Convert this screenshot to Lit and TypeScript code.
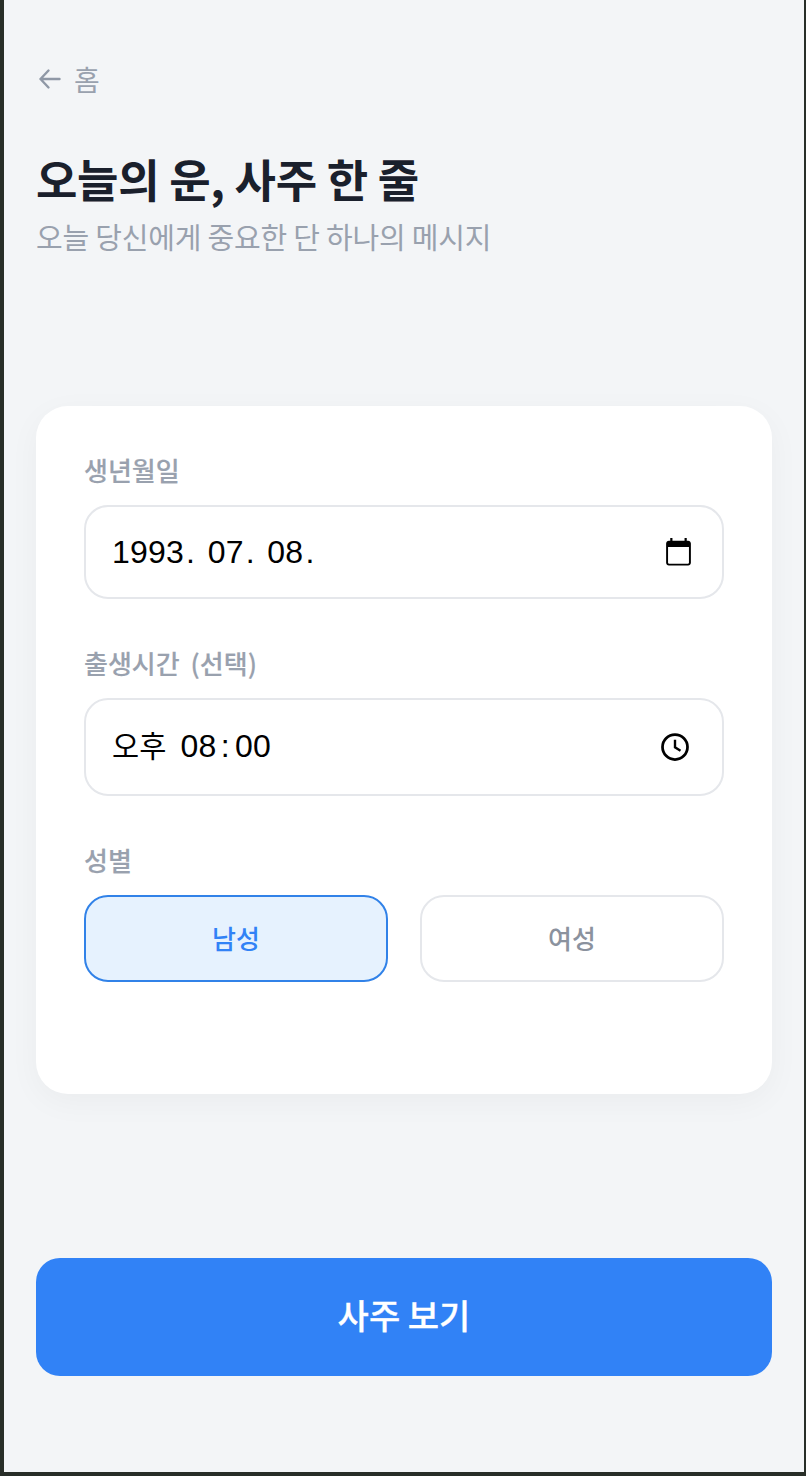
import { LitElement, html, css } from "lit";
import { customElement } from "lit/decorators.js";

@customElement("app-root")
export class AppRoot extends LitElement {
  static styles = css`
    :host { display: block; background: #282e28; padding: 0 2px 4px 4px; height: 1472px; font-family: "Noto Sans CJK KR", sans-serif; }
    .page { height: 1472px; box-sizing: border-box; background: #f3f5f7; padding: 60px 32px 96px; display: flex; flex-direction: column; }
    .back { display: flex; align-items: center; gap: 11px; height: 38px; color: #99a1ae; font-size: 28px; line-height: 38px; padding-left: 1px; }
    .back svg { width: 26px; height: 26px; display: block; }
    h1 { margin: 52px 0 0; font-size: 45px; line-height: 58px; font-weight: 700; color: #1a202c; letter-spacing: -0.3px; }
    .sub { margin: 8px 0 0; font-size: 29px; line-height: 40px; color: #99a1ae; font-weight: 400; letter-spacing: -0.2px; }
    .card { margin-top: 150px; height: 688px; box-sizing: border-box; background: #fff; border-radius: 32px; padding: 46px 48px 48px; box-shadow: 0 8px 32px rgba(0,0,0,.04); }
    .label { font-size: 26px; line-height: 35px; font-weight: 500; color: #99a1ae; word-spacing: 5px; -webkit-text-stroke: 0.15px #99a1ae; }
    .input { box-sizing: border-box; margin-top: 18px; border: 2px solid #e5e7eb; border-radius: 24px; padding: 0 26px; display: flex; align-items: center; justify-content: space-between; font-family: "Liberation Sans", "Noto Sans CJK KR", sans-serif; font-size: 32px; color: #000; background: #fff; }
    .date { height: 94px; margin-bottom: 46px; letter-spacing: 0.2px; word-spacing: 3.5px; }
    .date .dot { margin-left: 2px; }
    .date svg { margin-right: 1px; }
    .time { height: 98px; margin-bottom: 46px; letter-spacing: 0.3px; }
    .time svg { margin-right: 6px; }
    .time .val { padding-bottom: 6px; }
    .time .kr { font-family: "Noto Sans CJK KR", sans-serif; font-size: 29.5px; margin-right: 5px; letter-spacing: 0; }
    .time .colon { margin: 0 5px 0 4px; }
    .val { display: block; white-space: pre; }
    .input svg { display: block; flex: none; }
    .seg { display: flex; gap: 32px; margin-top: 18px; }
    .opt { flex: 1; height: 87px; box-sizing: border-box; border: 2px solid #e5e7eb; border-radius: 24px; display: flex; align-items: center; justify-content: center; font-size: 26px; font-weight: 500; color: #8b929e; background: #fff; padding-bottom: 3px; }
    .opt.on { border-color: #3182e8; background: #e6f2fe; color: #3182f6; }
    .spacer { flex: 1; }
    .cta { height: 118px; box-sizing: border-box; padding-bottom: 5px; border-radius: 24px; background: #3182f6; color: #fff; font-size: 34px; font-weight: 500; -webkit-text-stroke: 0.3px #fff; display: flex; align-items: center; justify-content: center; }
  `;

  render() {
    return html`
      <div class="page">
        <div class="back">
          <svg viewBox="0 0 26 26" fill="none" stroke="#8f98a6" stroke-width="2.4" stroke-linecap="round" stroke-linejoin="round"><path d="M22.5 13H3.5M11.5 4.500L3.500 13l8 8.500"/></svg>
          <span>홈</span>
        </div>
        <h1>오늘의 운, 사주 한 줄</h1>
        <div class="sub">오늘 당신에게 중요한 단 하나의 메시지</div>
        <div class="card">
          <div class="label">생년월일</div>
          <div class="input date">
            <span class="val">1993<span class="dot">.</span> 07<span class="dot">.</span> 08<span class="dot">.</span></span>
            <svg width="33" height="33" viewBox="0 0 24 24" fill="#000"><path d="M19 3.500h-1V1.500h-1.600v2H7.600v-2H6v2H5c-1.100 0-2 .9-2 2v14c0 1.100.9 2 2 2h14c1.100 0 2-.9 2-2v-14c0-1.100-.9-2-2-2zm.6 16c0 .4-.2.6-.6.6H5c-.4 0-.6-.2-.6-.6V8h15.200v11.500z"/></svg>
          </div>
          <div class="label">출생시간 (선택)</div>
          <div class="input time">
            <span class="val"><span class="kr">오후</span> 08<span class="colon">:</span>00</span>
            <svg width="30" height="30" viewBox="0 0 24 24" fill="none" stroke="#000" stroke-width="2.200"><circle cx="12" cy="12" r="10"/><path d="M12 6.200V12.300l4.400 2.700" stroke-width="1.900"/></svg>
          </div>
          <div class="label">성별</div>
          <div class="seg">
            <div class="opt on">남성</div>
            <div class="opt">여성</div>
          </div>
        </div>
        <div class="spacer"></div>
        <div class="cta">사주 보기</div>
      </div>
    `;
  }
}
